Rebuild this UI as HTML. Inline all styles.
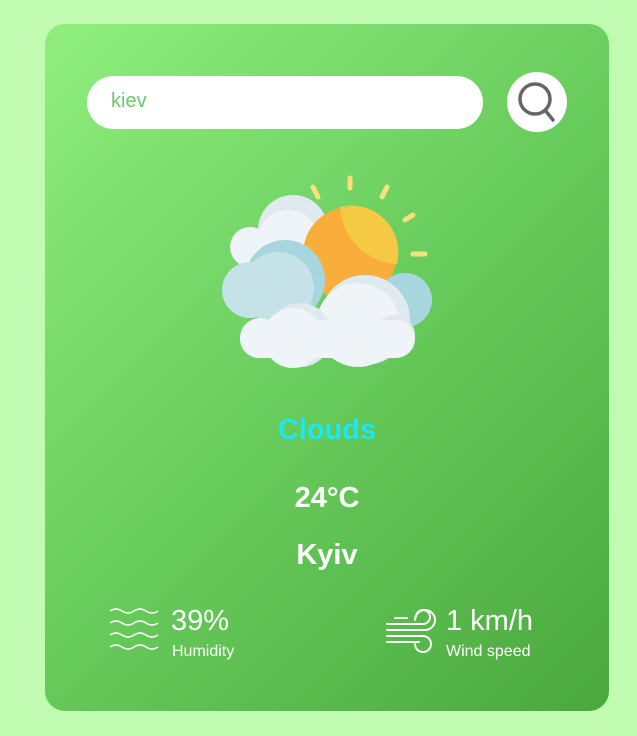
<!DOCTYPE html>
<html><head><style>
html,body{margin:0;padding:0}
body{width:637px;height:736px;background:#c0fbb1;position:relative;overflow:hidden;font-family:"Liberation Sans",sans-serif}
.card{position:absolute;left:45px;top:24px;width:564px;height:687px;border-radius:20px;background:linear-gradient(135deg,#8fee7e 0%,#68cc5c 50%,#4aa83d 100%)}
.inp{position:absolute;left:87px;top:76px;width:396px;height:53px;border-radius:27px;background:#fff}
.inp span{position:absolute;left:24px;top:14px;font-size:20px;color:#6cc86e}
.btn{position:absolute;left:507px;top:72px;width:60px;height:60px;border-radius:50%;background:#fff}
.t{position:absolute;left:45px;width:564px;text-align:center;color:#fff;font-weight:bold}
.w{position:absolute;color:#fff}
</style></head><body>
<div class="card"></div>
<div class="inp"><span>kiev</span></div>
<div class="btn"><svg width="60" height="60"><circle cx="28" cy="27" r="15" fill="none" stroke="#666" stroke-width="3.5"/><line x1="38" y1="38" x2="46" y2="48" stroke="#666" stroke-width="3.5" stroke-linecap="round"/></svg></div>
<svg style="position:absolute;left:200px;top:170px" width="240" height="200" viewBox="0 0 240 200">
<g stroke="#f9e07e" stroke-width="5" stroke-linecap="round">
<line x1="150" y1="8" x2="150" y2="18"/><line x1="113" y1="17" x2="118" y2="27"/><line x1="187" y1="17" x2="182" y2="27"/><line x1="205" y1="50" x2="213" y2="45"/><line x1="213" y1="84" x2="225" y2="84"/></g>
<circle cx="93" cy="60" r="35" fill="#dfe9ef"/><circle cx="88" cy="70" r="30" fill="#eff4f8"/><circle cx="50" cy="77" r="20" fill="#eff4f8"/>
<circle cx="150" cy="84" r="47" fill="#f9ae3c"/><path d="M140 37 A47 47 0 0 1 197 94 A60 60 0 0 1 140 37Z" fill="#f6c945"/>
<circle cx="205" cy="130" r="27" fill="#a8d6de"/><circle cx="85" cy="110" r="40" fill="#a8d6de"/><circle cx="78" cy="118" r="36" fill="#c4e2e8"/><circle cx="50" cy="120" r="28" fill="#c4e2e8"/>
<circle cx="165" cy="150" r="45" fill="#dfe9ef"/><circle cx="158" cy="155" r="42" fill="#eff4f8"/>
<circle cx="100" cy="165" r="32" fill="#dfe9ef"/><circle cx="93" cy="168" r="30" fill="#eff4f8"/>
<circle cx="195" cy="165" r="20" fill="#dfe9ef"/>
<rect x="40" y="150" width="175" height="38" rx="19" fill="#eff4f8"/><circle cx="60" cy="168" r="20" fill="#eff4f8"/>
</svg>
<div class="t" style="top:414px;font-size:29px;color:#1ee6f2">Clouds</div>
<div class="t" style="top:482px;font-size:29px">24°C</div>
<div class="t" style="top:539px;font-size:29px">Kyiv</div>
<svg style="position:absolute;left:108px;top:605px" width="54" height="50" fill="none" stroke="#fff" stroke-width="1.5">
<path d="M2 6 q6 -4 12 0 t12 0 t12 0 t12 0"/><path d="M2 18 q6 -4 12 0 t12 0 t12 0 t12 0"/><path d="M2 30 q6 -4 12 0 t12 0 t12 0 t12 0"/><path d="M2 42 q6 -4 12 0 t12 0 t12 0 t12 0"/></svg>
<div class="w" style="left:171px;top:605px;font-size:29px">39%</div>
<div class="w" style="left:172px;top:643px;font-size:16px">Humidity</div>
<svg style="position:absolute;left:385px;top:605px" width="52" height="50" fill="none" stroke="#fff" stroke-width="2" stroke-linecap="round">
<path d="M2 19 H38 a7 7 0 1 0 -7 -7"/><path d="M2 25 H40 a10 10 0 1 0 -10 -10"/><path d="M2 31 H38 a8 8 0 1 1 -8 8"/><path d="M2 37 H34"/><path d="M10 13 H22"/></svg>
<div class="w" style="left:446px;top:605px;font-size:29px">1 km/h</div>
<div class="w" style="left:446px;top:643px;font-size:16px">Wind speed</div>
</body></html>
